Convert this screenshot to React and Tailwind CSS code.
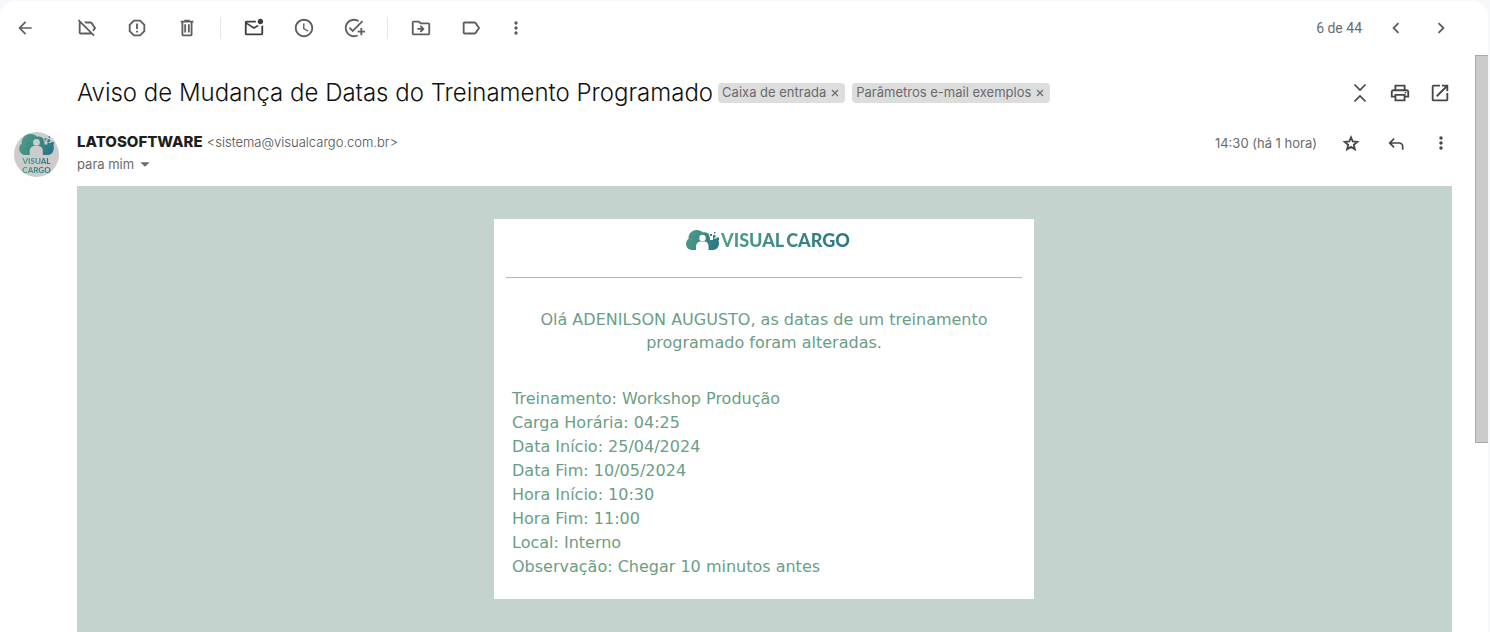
import {
  MdArrowBack,
  MdOutlineLabelOff,
  MdReportGmailerrorred,
  MdOutlineMarkEmailUnread,
  MdSchedule,
  MdAddTask,
  MdOutlineDriveFileMove,
  MdOutlineLabel,
  MdMoreVert,
  MdChevronLeft,
  MdChevronRight,
  MdOutlinePrint,
  MdOpenInNew,
  MdArrowDropDown,
} from 'react-icons/md';

function TrashIcon() {
  return (
    <svg viewBox="0 0 24 24" className="size-[22px]" fill="currentColor" aria-hidden="true">
      <path
        fillRule="evenodd"
        d="M15 4V3H9v1H5v2h1v13a2 2 0 0 0 2 2h8a2 2 0 0 0 2-2V6h1V4zM8 6h8v13H8zM9 8v9h2V8zm4 0v9h2V8z"
      />
    </svg>
  );
}

function CollapseIcon() {
  return (
    <svg viewBox="0 0 22 22" className="size-[22px]" fill="none" stroke="currentColor" strokeWidth="1.7" aria-hidden="true">
      <path d="M5.5 2.5 11 8l5.5-5.5M5.5 19.5 11 14l5.5 5.5" />
    </svg>
  );
}

function StarIcon() {
  return (
    <svg viewBox="0 0 24 24" className="size-5" fill="none" stroke="currentColor" strokeWidth="2.2" aria-hidden="true">
      <path d="m12 5.2 2.1 5 5.400.450-4.100 3.550 1.250 5.300L12 16.700 7.350 19.500l1.250-5.300-4.100-3.550 5.400-.450z" />
    </svg>
  );
}

function ReplyIcon() {
  return (
    <svg viewBox="0 0 24 24" className="size-5" fill="currentColor" aria-hidden="true">
      <path d="M19 20v-4q0-1.25-.875-2.125T16 13H6.8l3.6 3.6L9 18l-6-6 6-6 1.4 1.4L6.8 11H16q2.075 0 3.538 1.463T21 16v4z" />
    </svg>
  );
}

function CargoMark({ id, className }) {
  return (
    <svg viewBox="0 0 66 40" className={className} fill="currentColor" aria-hidden="true">
      <defs>
        <linearGradient id={id} gradientUnits="userSpaceOnUse" x1="0" y1="0" x2="66" y2="30">
          <stop offset="0" stopColor="#4f9f86" />
          <stop offset="1" stopColor="#2a7586" />
        </linearGradient>
      </defs>
      <path
        fill={`url(#${id})`}
        d="M12 40C5 40 0 34 0 28c0-5 2-8 5-10C4 9 11 0 21 0c6 0 10 2 13 5 5-1 9 0 12 4l1 5h14c3 3 5 7 5 12 0 8-5 14-12 14z"
      />
      <circle cx="33" cy="16" r="6.5" />
      <path d="M20 40v-7c0-6 4-10 9-10h8c5 0 8 4 8 10v7z" />
      <path d="M48 14h6v6h-6zM56 12h6v5h-6z" />
      <path fill={`url(#${id})`} d="M48 8h4v4h-4zM54 10h5v5h-5zM56 4h3v3h-3zM61 15h5v5h-5z" />
    </svg>
  );
}

function IconButton({ label, width = 'w-[50px]', children }) {
  return (
    <button type="button" aria-label={label} className={`flex h-10 shrink-0 items-center justify-center ${width}`}>
      {children}
    </button>
  );
}

function Divider() {
  return <span className="mx-2 h-[22px] w-px shrink-0 bg-[#e3e7eb]" />;
}

function Toolbar() {
  return (
    <header className="flex h-[54px] shrink-0 items-center pr-[25px] text-[#5c5e60]">
      <IconButton label="Voltar"><MdArrowBack size={20} /></IconButton>
      <div className="ml-3 flex items-center">
        <IconButton label="Remover marcador"><MdOutlineLabelOff size={22} /></IconButton>
        <IconButton label="Denunciar spam"><MdReportGmailerrorred size={22} /></IconButton>
        <IconButton label="Excluir"><TrashIcon /></IconButton>
        <Divider />
        <span className="flex text-[#3c3e40]">
          <IconButton label="Marcar como não lida"><MdOutlineMarkEmailUnread size={22} /></IconButton>
        </span>
        <IconButton label="Adiar"><MdSchedule size={22} /></IconButton>
        <IconButton label="Adicionar às tarefas"><MdAddTask size={22} /></IconButton>
        <Divider />
        <IconButton label="Mover para"><MdOutlineDriveFileMove size={22} /></IconButton>
        <IconButton label="Marcadores"><MdOutlineLabel size={22} /></IconButton>
        <IconButton label="Mais" width="w-10"><MdMoreVert size={20} /></IconButton>
      </div>
      <span className="mr-[11px] ml-auto font-[Roboto,sans-serif] text-sm text-[#6a6c6e]">6 de 44</span>
      <IconButton label="Mais recente" width="w-[45px]"><MdChevronLeft size={22} /></IconButton>
      <IconButton label="Mais antiga" width="w-[45px]"><MdChevronRight size={22} /></IconButton>
    </header>
  );
}

function Chip({ children }) {
  return (
    <span className="flex h-5 items-center gap-[3px] rounded bg-[#dddddd] px-1 text-[13px] text-[#6a6a6a]">
      {children}
      <button type="button" aria-label={`Remover ${children}`} className="flex w-3 justify-center">
        <svg viewBox="0 0 8 8" className="size-2" fill="none" stroke="currentColor" strokeWidth="1.2" aria-hidden="true">
          <path d="M1 1l6 6M7 1 1 7" />
        </svg>
      </button>
    </span>
  );
}

function SubjectRow() {
  return (
    <div className="flex h-[76px] items-center">
      <h1 className="text-2xl font-light text-[#111111]">
        Aviso de Mudança de Datas do Treinamento Programado
      </h1>
      <div className="ml-[5px] flex gap-[7px]">
        <Chip>Caixa de entrada</Chip>
        <Chip>Parâmetros e-mail exemplos</Chip>
      </div>
      <div className="-mr-2 ml-auto flex text-[#444746]">
        <IconButton label="Recolher tudo" width="w-10"><CollapseIcon /></IconButton>
        <IconButton label="Imprimir" width="w-10"><MdOutlinePrint size={22} /></IconButton>
        <IconButton label="Abrir em nova janela" width="w-10"><MdOpenInNew size={22} /></IconButton>
      </div>
    </div>
  );
}

function Avatar() {
  return (
    <div className="mt-px flex size-[45px] flex-col items-center overflow-hidden rounded-full bg-[#cccccc]">
      <CargoMark id="avatar-mark" className="mt-[2px] h-[21px] w-[35px] text-[#cccccc]" />
      <span className="mt-[2px] bg-gradient-to-r from-[#4f9f86] to-[#2a7586] bg-clip-text text-center font-[Lato,sans-serif] text-[8px] leading-[9px] font-black text-transparent">
        VISUAL
        <br />
        CARGO
      </span>
    </div>
  );
}

function SenderRow() {
  return (
    <div className="flex h-[55px]">
      <div className="min-w-0 leading-[22px]">
        <p className="flex items-baseline gap-1">
          <span className="text-[15px] leading-[22px] font-extrabold text-[#1f1f1f]">LATOSOFTWARE</span>
          <span className="text-[13px] leading-[22px] font-light text-[#4e4e4e]">&lt;sistema@visualcargo.com.br&gt;</span>
        </p>
        <button type="button" className="flex items-center text-[13px] leading-[22px] text-[#6a6a6a]">
          para mim
          <MdArrowDropDown size={22} />
        </button>
      </div>
      <div className="-mr-[11px] ml-auto flex h-6 items-center text-[#444746]">
        <time className="mr-[11px] text-[13px] leading-[22px] text-[#6a6a6a]">14:30 (há 1 hora)</time>
        <IconButton label="Com estrela" width="w-[45px]"><StarIcon /></IconButton>
        <IconButton label="Responder" width="w-[45px]"><ReplyIcon /></IconButton>
        <IconButton label="Mais opções" width="w-[45px]"><MdMoreVert size={20} /></IconButton>
      </div>
    </div>
  );
}

const details = [
  ['Treinamento', 'Workshop Produção'],
  ['Carga Horária', '04:25'],
  ['Data Início', '25/04/2024'],
  ['Data Fim', '10/05/2024'],
  ['Hora Início', '10:30'],
  ['Hora Fim', '11:00'],
  ['Local', 'Interno'],
  ['Observação', 'Chegar 10 minutos antes'],
];

function EmailBody() {
  return (
    <div className="flex-1 bg-[#c5d3ce] pt-[33px] pr-px">
      <article className="mx-auto w-full max-w-[540px] bg-white px-3 pt-[10px] pb-5 font-['DejaVu_Sans',sans-serif] text-base text-[#6a9e85]">
        <div className="flex h-[22px] items-center justify-center gap-[2px] pl-2">
          <CargoMark id="brand-mark" className="h-5 w-[33px] text-white" />
          <span className="flex gap-[2px] bg-gradient-to-r from-[#4f9f86] to-[#2a7586] bg-clip-text font-[Lato,sans-serif] text-lg leading-[22px] font-black text-transparent">
            <span>VISUAL</span>
            <span>CARGO</span>
          </span>
        </div>
        <hr className="mt-[26px] border-[#b3b5b4]" />
        <p className="mx-auto mt-[30px] max-w-[470px] text-center leading-[23px]">
          Olá ADENILSON AUGUSTO, as datas de um treinamento programado foram alteradas.
        </p>
        <ul className="mt-[33px] px-[6px] leading-6">
          {details.map(([label, value]) => (
            <li key={label}>{`${label}: ${value}`}</li>
          ))}
        </ul>
      </article>
    </div>
  );
}

export default function App() {
  return (
    <div className="flex h-screen overflow-hidden bg-[#f6f8fc] pt-px pr-[2px] font-[Inter,sans-serif]">
      <div className="flex min-w-0 flex-1 flex-col rounded-t-2xl bg-white">
        <Toolbar />
        <div className="flex min-h-0 flex-1">
          <main className="flex min-w-0 flex-1 pr-[23px]">
            <div className="w-[77px] shrink-0 pt-[76px] pl-[14px]">
              <Avatar />
            </div>
            <div className="flex min-w-0 flex-1 flex-col">
              <SubjectRow />
              <SenderRow />
              <EmailBody />
            </div>
          </main>
          <div className="w-[13px] shrink-0" aria-hidden="true">
            <div className="h-[388px] border border-r-0 border-[#a9a9a9] bg-[#cbcbcb]" />
          </div>
        </div>
      </div>
    </div>
  );
}
